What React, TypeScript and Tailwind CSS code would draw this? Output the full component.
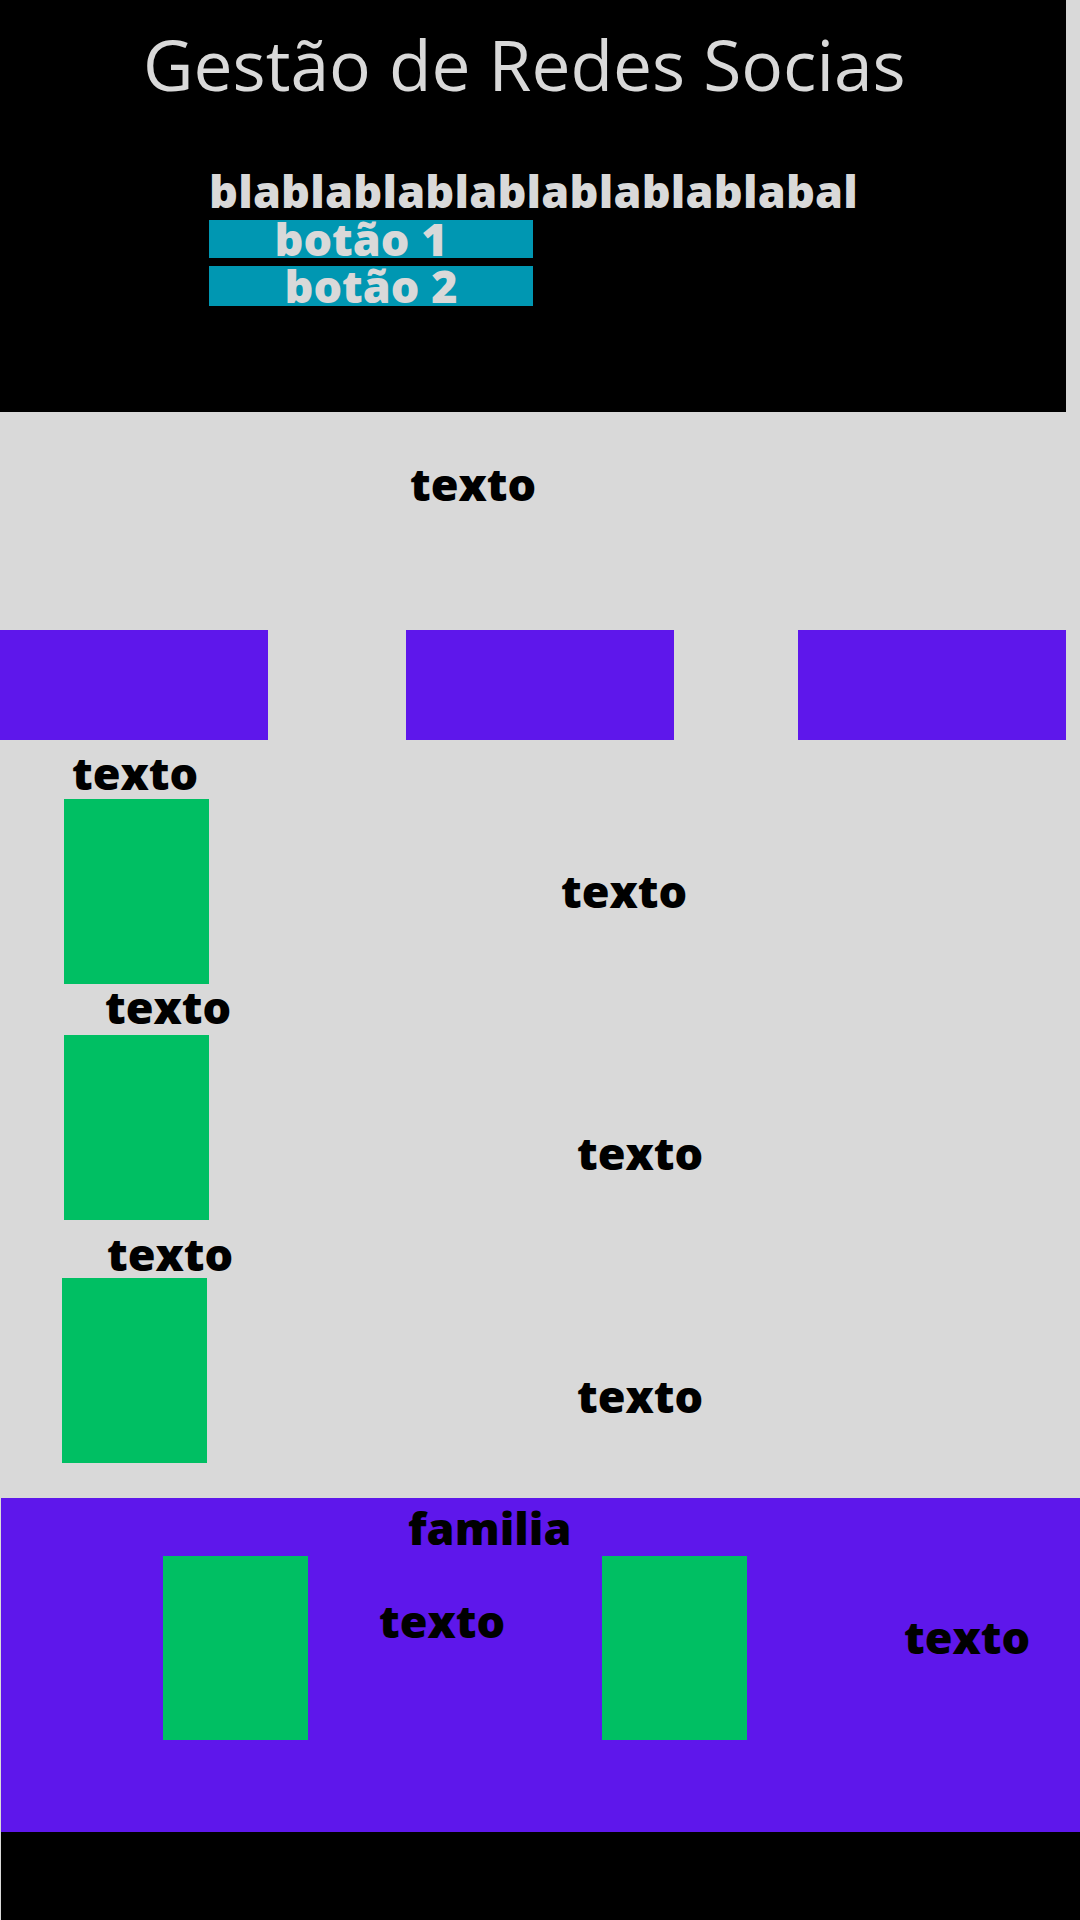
import React from 'react';

const font = "font-['Open_Sans',sans-serif]";

const Label: React.FC<{ className?: string; children: React.ReactNode }> = ({ className = '', children }) => (
  <p className={`${font} font-extrabold text-[45px] leading-none text-black ${className}`}>{children}</p>
);

const App: React.FC = () => {
  return (
    <div className={`w-[1080px] min-h-[1920px] bg-[#d9d9d9] flex flex-col ${font}`}>
      {/* header */}
      <header className="w-[1066px] h-[412px] bg-black flex flex-col">
        <h1 className="pl-[143px] pt-[30px] text-[69.5px] leading-none font-normal text-[#d9d9d9] whitespace-nowrap">
          Gestão de Redes Socias
        </h1>
        <div className="ml-[209px] mt-[68px] flex flex-col">
          <p className="text-[45px] leading-none font-extrabold tracking-[0.2px] text-[#d9d9d9] whitespace-nowrap">
            blablablablablablablablabal
          </p>
          <button className="mt-[7px] w-[324px] h-[38px] bg-[#0097b2] text-[45px] leading-[38px] font-extrabold text-[#d9d9d9] pr-5">
            botão 1
          </button>
          <button className="mt-[8px] w-[324px] h-[40px] bg-[#0097b2] text-[45px] leading-[40px] font-extrabold text-[#d9d9d9]">
            botão 2
          </button>
        </div>
      </header>

      {/* main */}
      <main className="flex flex-col pb-[35px]">
        <Label className="pl-[410px] mt-[49px]">texto</Label>

        <div className="mt-[124px] flex">
          <div className="w-[268px] h-[110px] bg-[#5e17eb]" />
          <div className="ml-[138px] w-[268px] h-[110px] bg-[#5e17eb]" />
          <div className="ml-[124px] w-[268px] h-[110px] bg-[#5e17eb]" />
        </div>

        <div className="mt-[10px] flex items-start">
          <div className="w-[240px] flex flex-col">
            <Label className="pl-[72px]">texto</Label>
            <div className="ml-[64px] mt-[4px] w-[145px] h-[185px] bg-[#00bf63]" />
          </div>
          <Label className="ml-[321px] mt-[118px]">texto</Label>
        </div>

        <div className="flex items-start">
          <div className="w-[240px] flex flex-col">
            <Label className="pl-[105px]">texto</Label>
            <div className="ml-[64px] mt-[6px] w-[145px] h-[185px] bg-[#00bf63]" />
          </div>
          <Label className="ml-[337px] mt-[146px]">texto</Label>
        </div>

        <div className="mt-[11px] flex items-start">
          <div className="w-[240px] flex flex-col">
            <Label className="pl-[107px]">texto</Label>
            <div className="ml-[62px] mt-[2px] w-[145px] h-[185px] bg-[#00bf63]" />
          </div>
          <Label className="ml-[337px] mt-[142px]">texto</Label>
        </div>
      </main>

      {/* familia */}
      <section className="ml-[1px] h-[334px] bg-[#5e17eb] flex flex-col">
        <Label className="pl-[407px] mt-[7px]">familia</Label>
        <div className="mt-[6px] flex items-start">
          <div className="ml-[162px] w-[145px] h-[184px] bg-[#00bf63]" />
          <div className="w-[294px] pl-[71px] pt-[42px]">
            <Label>texto</Label>
          </div>
          <div className="w-[145px] h-[184px] bg-[#00bf63]" />
          <Label className="ml-[157px] mt-[58px]">texto</Label>
        </div>
      </section>

      <footer className="ml-[1px] h-[88px] bg-black" />
    </div>
  );
};

export default App;
